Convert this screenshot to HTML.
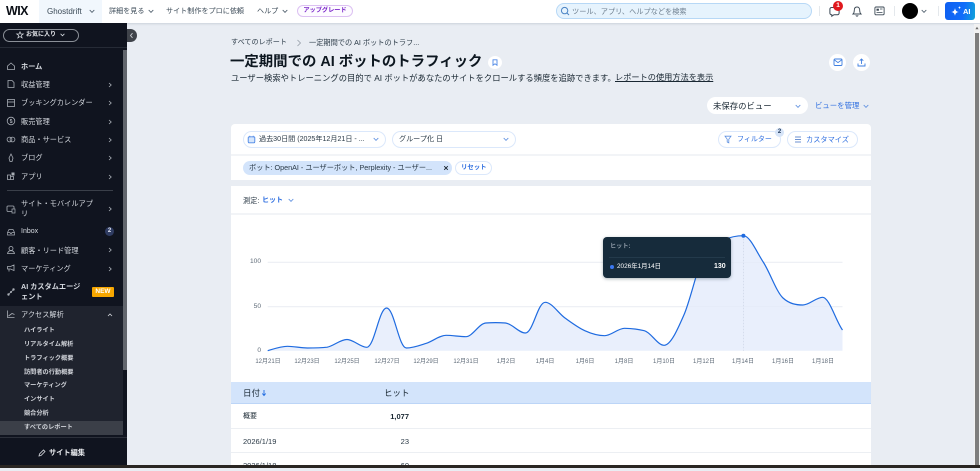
<!DOCTYPE html>
<html lang="ja">
<head>
<meta charset="utf-8">
<title>一定期間での AI ボットのトラフィック</title>
<style>
*{box-sizing:border-box;margin:0;padding:0}
html,body{width:980px;height:468px;overflow:hidden;background:#e9edf3;font-family:"Liberation Sans","Noto Sans CJK JP",sans-serif;color:#162d3d}
.a{position:absolute;white-space:nowrap}
svg{display:block;overflow:visible}
.top{position:absolute;left:0;top:0;width:980px;height:23px;background:#fff;box-shadow:0 1px 2px rgba(22,45,61,.14)}
.tn{font-size:7.1px;color:#3b4a57;top:6px;line-height:11px}
.side{position:absolute;left:0;top:23px;width:127px;height:442px;background:#10141f}
.m{position:absolute;left:21px;font-size:7.2px;line-height:11px;color:#d6dae0;white-space:nowrap}
.ch{position:absolute;left:107px;width:6px;height:6px}
.ic{position:absolute;left:6px;width:10px;height:10px}
.sub{position:absolute;left:24px;font-size:6.2px;line-height:10px;color:#d0d3d9;white-space:nowrap;font-weight:700}
.card{position:absolute;background:#fff}
.pill{position:absolute;background:#fff;border:1px solid #dbe8fb;border-radius:11px}
.blue{color:#2f6fe0}
.xl{position:absolute;top:357px;font-size:6px;line-height:10px;color:#5f6b78;transform:translateX(-50%);white-space:nowrap}
.yl{position:absolute;font-size:6.6px;line-height:10px;color:#5f6b78;text-align:right;width:14px;left:247px}
</style>
</head>
<body>

<!-- top bar -->
<div class="top">
  <div class="a" style="left:6px;top:3px;font-size:12.5px;line-height:16px;font-weight:700;color:#0b0f16;letter-spacing:-.6px">WIX</div>
  <div class="a" style="left:39px;top:0;width:63px;height:23px;background:#f1f7fd"></div>
  <div class="a tn" style="left:47px;font-size:8px">Ghostdrift</div>
  <svg class="a" style="left:89px;top:9px" width="6" height="5" viewBox="0 0 6 5"><path d="M.7 1 3 3.400 5.300 1" fill="none" stroke="#4a5a68" stroke-width=".9"/></svg>
  <div class="a tn" style="left:109px">詳細を見る</div>
  <svg class="a" style="left:148px;top:9px" width="6" height="5" viewBox="0 0 6 5"><path d="M.7 1 3 3.400 5.300 1" fill="none" stroke="#4a5a68" stroke-width=".9"/></svg>
  <div class="a tn" style="left:166px">サイト制作をプロに依頼</div>
  <div class="a tn" style="left:257px">ヘルプ</div>
  <svg class="a" style="left:282px;top:9px" width="6" height="5" viewBox="0 0 6 5"><path d="M.7 1 3 3.400 5.300 1" fill="none" stroke="#4a5a68" stroke-width=".9"/></svg>
  <div class="a" style="left:297px;top:5px;width:56px;height:12px;border:1px solid #dcc1f2;border-radius:7px;background:#fdfbff;color:#7a25c9;font-size:6.2px;line-height:10px;text-align:center;font-weight:700">アップグレード</div>

  <div class="a" style="left:556px;top:3px;width:256px;height:16px;border:1px solid #b7d8f6;border-radius:8px;background:#e6f3fd"></div>
  <svg class="a" style="left:560px;top:6px" width="10" height="10" viewBox="0 0 10 10"><circle cx="4.600" cy="4.600" r="3.200" fill="none" stroke="#4a83c4" stroke-width="1"/><path d="M7 7 9 9" stroke="#4a83c4" stroke-width="1"/></svg>
  <div class="a" style="left:572px;top:6px;font-size:7.200px;line-height:11px;color:#6d7e8e">ツール、アプリ、ヘルプなどを検索</div>

  <div class="a" style="left:819px;top:6px;width:1px;height:10px;background:#e4e8ec"></div>
  <svg class="a" style="left:829px;top:6px" width="11" height="11" viewBox="0 0 11 11"><path d="M2.500 1.500h6a1.600 1.600 0 0 1 1.600 1.600v4a1.600 1.600 0 0 1-1.600 1.600H5L2.800 10.200V8.700h-.3A1.600 1.600 0 0 1 .9 7.100v-4a1.600 1.600 0 0 1 1.600-1.600z" fill="none" stroke="#3a4753" stroke-width="1"/></svg>
  <div class="a" style="left:833px;top:1px;width:10px;height:10px;border-radius:50%;background:#e0181d;color:#fff;font-size:6.500px;line-height:10px;text-align:center;font-weight:700">1</div>
  <svg class="a" style="left:852px;top:6px" width="10" height="11" viewBox="0 0 10 11"><path d="M5 1C3 1 2.300 2.600 2.300 4.200c0 2-.5 3-1.300 3.800h8C8.200 7.200 7.700 6.200 7.700 4.200 7.700 2.600 7 1 5 1zM3.900 9.200c.2.700.6 1 1.100 1s.9-.3 1.100-1" fill="none" stroke="#3a4753" stroke-width=".9"/></svg>
  <svg class="a" style="left:874px;top:6px" width="11" height="10" viewBox="0 0 11 10"><rect x=".9" y="1" width="9.200" height="7.800" rx="1" fill="none" stroke="#3a4753" stroke-width=".9"/><rect x="2.500" y="2.700" width="2.400" height="2" fill="#3a4753"/><path d="M2.500 6.500h6M6 3h2.500" stroke="#3a4753" stroke-width=".8"/></svg>
  <div class="a" style="left:894px;top:6px;width:1px;height:10px;background:#e4e8ec"></div>
  <div class="a" style="left:902px;top:3px;width:16px;height:16px;border-radius:50%;background:#000"></div>
  <svg class="a" style="left:921px;top:9px" width="6" height="5" viewBox="0 0 6 5"><path d="M.7 1 3 3.400 5.300 1" fill="none" stroke="#4a5a68" stroke-width=".9"/></svg>
  <div class="a" style="left:938px;top:6px;width:1px;height:10px;background:#e4e8ec"></div>
  <div class="a" style="left:945px;top:2px;width:30px;height:18px;border-radius:3px;background:linear-gradient(100deg,#0f5ff0 0%,#116dfa 60%,#11a3d8 100%)"></div>
  <svg class="a" style="left:950px;top:5px" width="12" height="12" viewBox="0 0 12 12"><path d="M5 3C5.400 5.600 6.300 6.600 9 7 6.300 7.400 5.400 8.400 5 11 4.600 8.400 3.700 7.400 1 7 3.700 6.600 4.600 5.600 5 3z" fill="#fff"/><path d="M9.500 1c.2 1.100.5 1.400 1.500 1.600-1 .2-1.300.5-1.500 1.600-.2-1.100-.5-1.400-1.500-1.600 1-.2 1.300-.5 1.500-1.600z" fill="#fff"/></svg>
  <div class="a" style="left:963px;top:6px;font-size:7.500px;line-height:11px;color:#fff;font-weight:700">AI</div>
</div>

<!-- sidebar -->
<div class="side"></div>
<div class="a" style="left:0;top:23px;width:127px;height:25px;border-bottom:1px solid #262b36"></div>
<div class="a" style="left:3px;top:29px;width:76px;height:13px;border:1px solid #8b9098;border-radius:7px"></div>
<svg class="a" style="left:16px;top:31px" width="8" height="8" viewBox="0 0 8 8"><path d="M4 .8 4.900 3H7.300L5.400 4.400 6.100 6.900 4 5.500 1.900 6.900 2.600 4.400.7 3H3.100z" fill="none" stroke="#d6dae0" stroke-width=".7"/></svg>
<div class="a" style="left:26px;top:30px;font-size:6px;line-height:11px;color:#e6e8ec;font-weight:700">お気に入り</div>
<svg class="a" style="left:60px;top:33px" width="5" height="4" viewBox="0 0 5 4"><path d="M.6.800 2.500 2.800 4.400.800" fill="none" stroke="#d6dae0" stroke-width=".8"/></svg>
<div class="a" style="left:127px;top:29px;width:10px;height:13px;background:#3f434a;border-radius:0 7px 7px 0"></div>
<svg class="a" style="left:129px;top:32px" width="5" height="7" viewBox="0 0 5 7"><path d="M3.500 1.200 1.500 3.500 3.500 5.800" fill="none" stroke="#c9ccd1" stroke-width=".9"/></svg>

<!-- menu -->
<div class="m" style="top:61px;font-weight:700">ホーム</div>
<div class="m" style="top:79px">収益管理</div>
<div class="m" style="top:97px">ブッキングカレンダー</div>
<div class="m" style="top:116px">販売管理</div>
<div class="m" style="top:134px">商品・サービス</div>
<div class="m" style="top:152px">ブログ</div>
<div class="m" style="top:171px">アプリ</div>
<div class="a" style="left:7px;top:190px;width:106px;height:1px;background:#3a3f49"></div>
<div class="m" style="top:199px;line-height:10px">サイト・モバイルアプ<br>リ</div>
<div class="m" style="top:226px;font-size:7px">Inbox</div>
<div class="m" style="top:245px">顧客・リード管理</div>
<div class="m" style="top:263px">マーケティング</div>
<div class="m" style="top:282px;font-weight:700;line-height:10px">AI カスタムエージ<br>ェント</div>
<div class="a" style="left:92px;top:287px;width:22px;height:10px;background:#f7a700;border-radius:1px;color:#fff;font-size:6.500px;line-height:10px;text-align:center;font-weight:700">NEW</div>
<div class="a" style="left:105px;top:227px;width:9px;height:9px;border-radius:50%;background:#2f3c62;color:#e4e8f2;font-size:6px;line-height:9px;text-align:center;font-weight:700">2</div>

<svg class="ic" style="top:61px" viewBox="0 0 10 10"><path d="M1.500 5 5 2l3.500 3v3.500h-7z" fill="none" stroke="#a9aeb6" stroke-width=".8"/></svg>
<svg class="ic" style="top:79px" viewBox="0 0 10 10"><path d="M2 1.500h4l2 2v5H2z" fill="none" stroke="#a9aeb6" stroke-width=".8"/></svg>
<svg class="ic" style="top:98px" viewBox="0 0 10 10"><rect x="1.500" y="1.500" width="7" height="7" fill="none" stroke="#a9aeb6" stroke-width=".8"/><path d="M1.500 4h7" stroke="#a9aeb6" stroke-width=".8"/></svg>
<svg class="ic" style="top:116px" viewBox="0 0 10 10"><circle cx="5" cy="5" r="3.800" fill="none" stroke="#a9aeb6" stroke-width=".8"/><path d="M6 3.500H4.300v1.500H6v1.500H4" fill="none" stroke="#a9aeb6" stroke-width=".7"/></svg>
<svg class="ic" style="top:134px" viewBox="0 0 10 10"><circle cx="3.500" cy="5.500" r="2.400" fill="none" stroke="#a9aeb6" stroke-width=".8"/><circle cx="6.500" cy="5.500" r="2.400" fill="none" stroke="#a9aeb6" stroke-width=".8"/></svg>
<svg class="ic" style="top:153px" viewBox="0 0 10 10"><path d="M5 1 7 5 6 8.500H4L3 5z" fill="none" stroke="#a9aeb6" stroke-width=".8"/></svg>
<svg class="ic" style="top:171px" viewBox="0 0 10 10"><path d="M1.500 4h3v4.500h-3zM4.500 5.500h3v3h-3z" fill="none" stroke="#a9aeb6" stroke-width=".8"/><rect x="5.500" y="1.500" width="3" height="3" fill="#a9aeb6"/></svg>
<svg class="ic" style="top:204px" viewBox="0 0 10 10"><rect x="1" y="2" width="7" height="5.500" rx="1" fill="none" stroke="#a9aeb6" stroke-width=".8"/><rect x="6" y="5" width="3" height="4" fill="#10141f" stroke="#a9aeb6" stroke-width=".7"/></svg>
<svg class="ic" style="top:227px" viewBox="0 0 10 10"><path d="M1.500 5.500 3 2.500h4l1.500 3V8h-7zM1.500 5.500H4l.5 1h1l.5-1h2.500" fill="none" stroke="#a9aeb6" stroke-width=".7"/></svg>
<svg class="ic" style="top:245px" viewBox="0 0 10 10"><circle cx="5" cy="3.500" r="2" fill="none" stroke="#a9aeb6" stroke-width=".8"/><path d="M1.500 8.500c.5-2 2-2.800 3.500-2.800s3 .8 3.500 2.800z" fill="none" stroke="#a9aeb6" stroke-width=".8"/></svg>
<svg class="ic" style="top:263px" viewBox="0 0 10 10"><path d="M1.500 3.500h3L8 2v5.500L4.500 6h-3zM3 6v2.500" fill="none" stroke="#a9aeb6" stroke-width=".8"/></svg>
<svg class="ic" style="top:287px" viewBox="0 0 10 10"><path d="M2.500 7.500 7.500 2.500" stroke="#a9aeb6" stroke-width=".7"/><circle cx="2.500" cy="7.500" r="1.200" fill="#a9aeb6"/><circle cx="5" cy="5" r="1" fill="#a9aeb6"/><circle cx="7.500" cy="2.500" r="1.200" fill="#a9aeb6"/></svg>

<svg class="ch" style="top:82px" viewBox="0 0 6 6"><path d="M2 1 4.200 3 2 5" fill="none" stroke="#aeb3ba" stroke-width=".8"/></svg>
<svg class="ch" style="top:100px" viewBox="0 0 6 6"><path d="M2 1 4.200 3 2 5" fill="none" stroke="#aeb3ba" stroke-width=".8"/></svg>
<svg class="ch" style="top:119px" viewBox="0 0 6 6"><path d="M2 1 4.200 3 2 5" fill="none" stroke="#aeb3ba" stroke-width=".8"/></svg>
<svg class="ch" style="top:137px" viewBox="0 0 6 6"><path d="M2 1 4.200 3 2 5" fill="none" stroke="#aeb3ba" stroke-width=".8"/></svg>
<svg class="ch" style="top:155px" viewBox="0 0 6 6"><path d="M2 1 4.200 3 2 5" fill="none" stroke="#aeb3ba" stroke-width=".8"/></svg>
<svg class="ch" style="top:174px" viewBox="0 0 6 6"><path d="M2 1 4.200 3 2 5" fill="none" stroke="#aeb3ba" stroke-width=".8"/></svg>
<svg class="ch" style="top:206px" viewBox="0 0 6 6"><path d="M2 1 4.200 3 2 5" fill="none" stroke="#aeb3ba" stroke-width=".8"/></svg>
<svg class="ch" style="top:247px" viewBox="0 0 6 6"><path d="M2 1 4.200 3 2 5" fill="none" stroke="#aeb3ba" stroke-width=".8"/></svg>
<svg class="ch" style="top:266px" viewBox="0 0 6 6"><path d="M2 1 4.200 3 2 5" fill="none" stroke="#aeb3ba" stroke-width=".8"/></svg>

<!-- analytics -->
<div class="a" style="left:0;top:306px;width:123px;height:129px;background:#1f232e"></div>
<div class="m" style="top:309px">アクセス解析</div>
<svg class="ic" style="top:309px" viewBox="0 0 10 10"><path d="M1.500 1.500v7h7M2.500 7 6 4.500l2.500 1" fill="none" stroke="#a9aeb6" stroke-width=".8"/></svg>
<svg class="ch" style="top:312px" viewBox="0 0 6 6"><path d="M1 4 3 2 5 4" fill="none" stroke="#cfd3d8" stroke-width=".8"/></svg>
<div class="sub" style="top:326px">ハイライト</div>
<div class="sub" style="top:340px">リアルタイム解析</div>
<div class="sub" style="top:354px">トラフィック概要</div>
<div class="sub" style="top:368px">訪問者の行動概要</div>
<div class="sub" style="top:381px">マーケティング</div>
<div class="sub" style="top:395px">インサイト</div>
<div class="sub" style="top:409px">競合分析</div>
<div class="a" style="left:0;top:421px;width:123px;height:14px;background:#3b3f48"></div>
<div class="sub" style="top:423px">すべてのレポート</div>
<div class="a" style="left:123px;top:50px;width:4px;height:320px;background:#62666d"></div>
<div class="a" style="left:0;top:437px;width:127px;height:1px;background:#2c303a"></div>
<svg class="a" style="left:38px;top:449px" width="8" height="8" viewBox="0 0 8 8"><path d="M1 7 1.500 5 5.500 1 7 2.500 3 6.500z" fill="none" stroke="#d9dce1" stroke-width=".8"/></svg>
<div class="a" style="left:49px;top:447px;font-size:7.200px;line-height:11px;color:#eceef1;font-weight:700">サイト編集</div>

<!-- page header -->
<div class="a" style="left:231px;top:37px;font-size:7.100px;line-height:11px;color:#2c3b48">すべてのレポート</div>
<svg class="a" style="left:296px;top:39px" width="6" height="8" viewBox="0 0 6 8"><path d="M1.500 1 4.500 4 1.500 7" fill="none" stroke="#8a949e" stroke-width=".7"/></svg>
<div class="a" style="left:309px;top:37px;font-size:7.200px;line-height:11px;color:#2c3b48">一定期間での AI ボットのトラフ...</div>
<div class="a" style="left:230px;top:52px;font-size:14.400px;line-height:20px;font-weight:700;color:#0d1720">一定期間での AI ボットのトラフィック</div>
<div class="a" style="left:488px;top:56px;width:14px;height:13px;border-radius:50%;background:#fff"></div>
<svg class="a" style="left:492px;top:59px" width="6" height="7" viewBox="0 0 6 7"><path d="M1 .8h4v5.400L3 4.800 1 6.200z" fill="none" stroke="#4d88e6" stroke-width=".9"/></svg>
<div class="a" style="left:231px;top:72px;font-size:8.300px;line-height:12px;color:#1a2833">ユーザー検索やトレーニングの目的で AI ボットがあなたのサイトをクロールする頻度を追跡できます。</div>
<div class="a" style="left:615px;top:72px;font-size:8.200px;line-height:12px;color:#1a2833;text-decoration:underline">レポートの使用方法を表示</div>
<div class="a" style="left:829px;top:54px;width:17px;height:17px;border-radius:50%;background:#fff"></div>
<svg class="a" style="left:833px;top:58px" width="10" height="9" viewBox="0 0 10 9"><rect x="1" y="1" width="8" height="6.500" rx="1" fill="none" stroke="#3f7fe0" stroke-width=".9"/><path d="M1.200 1.800 5 4.600 8.800 1.800" fill="none" stroke="#3f7fe0" stroke-width=".9"/></svg>
<div class="a" style="left:853px;top:54px;width:17px;height:17px;border-radius:50%;background:#fff"></div>
<svg class="a" style="left:857px;top:58px" width="9" height="9" viewBox="0 0 9 9"><path d="M4.500 6V1M2.700 2.700 4.500 1l1.800 1.700M1 5.500V8h7V5.500" fill="none" stroke="#3f7fe0" stroke-width=".9"/></svg>

<div class="a" style="left:707px;top:97px;width:101px;height:17px;background:#fff;border-radius:9px"></div>
<div class="a" style="left:713px;top:100px;font-size:8.400px;line-height:12px;color:#1a2833">未保存のビュー</div>
<svg class="a" style="left:795px;top:104px" width="6" height="5" viewBox="0 0 6 5"><path d="M.7 1 3 3.400 5.300 1" fill="none" stroke="#5d8fe0" stroke-width=".9"/></svg>
<div class="a blue" style="left:815px;top:100px;font-size:7.400px;line-height:12px">ビューを管理</div>
<svg class="a" style="left:863px;top:104px" width="6" height="5" viewBox="0 0 6 5"><path d="M.7 1 3 3.400 5.300 1" fill="none" stroke="#5d8fe0" stroke-width=".9"/></svg>

<!-- filter card -->
<div class="card" style="left:231px;top:124px;width:640px;height:30px;border-radius:4px 4px 0 0"></div>
<div class="card" style="left:231px;top:156px;width:640px;height:24px"></div>
<div class="a" style="left:231px;top:154px;width:640px;height:2px;background:#f2f4f7"></div>
<div class="pill" style="left:243px;top:131px;width:143px;height:17px"></div>
<svg class="a" style="left:247px;top:135px" width="9" height="9" viewBox="0 0 9 9"><rect x="1.200" y="1.800" width="6.600" height="6" rx="1" fill="#d6e6fb" stroke="#4d88e6" stroke-width=".9"/><path d="M2.800.8v1.600M6.200.8v1.600" stroke="#4d88e6" stroke-width=".8"/></svg>
<div class="a" style="left:259px;top:134px;font-size:7.100px;line-height:11px;color:#2a3946">過去30日間 (2025年12月21日 - ...</div>
<svg class="a" style="left:373px;top:137px" width="6" height="5" viewBox="0 0 6 5"><path d="M.7 1 3 3.400 5.300 1" fill="none" stroke="#5d8fe0" stroke-width=".9"/></svg>
<div class="pill" style="left:392px;top:131px;width:124px;height:17px"></div>
<div class="a" style="left:399px;top:134px;font-size:7.100px;line-height:11px;color:#2a3946">グループ化 日</div>
<svg class="a" style="left:503px;top:137px" width="6" height="5" viewBox="0 0 6 5"><path d="M.7 1 3 3.400 5.300 1" fill="none" stroke="#5d8fe0" stroke-width=".9"/></svg>
<div class="pill" style="left:718px;top:131px;width:63px;height:17px"></div>
<svg class="a" style="left:724px;top:135px" width="8" height="9" viewBox="0 0 8 9"><path d="M1 1.200h6L4.800 4.200V7.800L3.200 7V4.200z" fill="none" stroke="#5d8fe0" stroke-width=".8"/></svg>
<div class="a blue" style="left:737px;top:134px;font-size:7px;line-height:11px">フィルター</div>
<div class="a" style="left:775px;top:128px;width:9px;height:9px;border-radius:50%;background:#d6e4f8;color:#1d3557;font-size:6px;line-height:9px;text-align:center;font-weight:700">2</div>
<div class="pill" style="left:787px;top:131px;width:71px;height:17px"></div>
<svg class="a" style="left:794px;top:135px" width="8" height="9" viewBox="0 0 8 9"><path d="M1 2h6M1 4.500h6M1 7h6" stroke="#3d6fc4" stroke-width=".8"/></svg>
<div class="a blue" style="left:806px;top:134px;font-size:7.200px;line-height:11px">カスタマイズ</div>

<div class="a" style="left:243px;top:161px;width:209px;height:14px;background:#d3e4fb;border-radius:7px"></div>
<div class="a" style="left:249px;top:162px;font-size:7.200px;line-height:12px;color:#2a3946">ボット: OpenAI - ユーザーボット, Perplexity - ユーザー...</div>
<svg class="a" style="left:443px;top:165px" width="6" height="6" viewBox="0 0 6 6"><path d="M1.200 1.200 4.800 4.800M4.800 1.200 1.200 4.800" stroke="#16222c" stroke-width=".9"/></svg>
<div class="pill" style="left:455px;top:161px;width:37px;height:14px"></div>
<div class="a blue" style="left:461px;top:163px;font-size:6.400px;line-height:10px;font-weight:700">リセット</div>

<!-- chart card -->
<div class="card" style="left:231px;top:186px;width:640px;height:279px"></div>
<div class="a" style="left:231px;top:213px;width:640px;height:2px;background:#f2f4f7"></div>
<div class="a" style="left:243px;top:195px;font-size:7.200px;line-height:11px;color:#2a3946">測定:</div>
<div class="a blue" style="left:262px;top:195px;font-size:7px;line-height:11px;font-weight:700">ヒット</div>
<svg class="a" style="left:288px;top:198px" width="6" height="5" viewBox="0 0 6 5"><path d="M.7 1 3 3.400 5.300 1" fill="none" stroke="#5d8fe0" stroke-width=".9"/></svg>

<div class="yl" style="top:257px">100</div>
<div class="yl" style="top:302px">50</div>
<div class="yl" style="top:346px">0</div>
<svg class="a" style="left:0;top:0" width="980" height="468" viewBox="0 0 980 468">
  <path d="M267.700 262.300H842.500M267.700 306.700H842.500" stroke="#eef0f3" stroke-width="1"/>
  <path d="M267.700 350.700C274.300 348.700 280.900 346.300 287.500 346.300C294.100 346.300 300.700 348 307.300 348C313.900 348 320.600 347.900 327.200 347.200C333.800 345.800 340.400 339.500 347 339.500C353.600 339.500 360.200 347.300 366.800 347.300C374.400 347.300 379 308 386.600 308C394.200 308 398.800 348 406.400 348C413 348 419.700 345.400 426.300 343.300C432.900 341.200 439.500 335.300 446.100 335.300C452.700 335.300 459.300 336.700 465.900 336.700C472.500 336.700 479.100 323.500 485.700 323C492.300 322.500 498.900 322.500 505.500 323C512.100 323.500 518.800 333 525.400 333C533 333 537.600 302.300 545.200 302.300C551.800 302.300 558.400 313.300 565 318C571.600 322.700 578.200 327.700 584.800 330.700C591.400 333.700 598 335.700 604.600 335.700C611.200 335.700 617.900 328.300 624.500 328.300C631.100 328.300 637.700 329.200 644.300 330.700C650.900 332.200 657.500 345.300 664.100 345.300C670.700 345.300 677.300 330 683.900 315C690.500 300 697.100 268 703.700 255C710.300 242 717 243 723.600 240C730.200 237 736.800 235.700 743.400 235.700C750 235.700 756.600 252 763.200 262C769.800 272 776.400 292 783 298C789.600 304 796.300 305 802.900 305C809.500 305 816.100 297.300 822.700 297.300C829.300 297.300 835.900 321 842.500 330L842.500 350.700L267.700 350.700Z" fill="#e9effc" stroke="none"/>
  <path d="M743.400 235.700V350.700" stroke="#cfd8e8" stroke-width=".8" stroke-dasharray="1.500 1.500"/>
  <path d="M267.700 262.300H842.500M267.700 306.700H842.500" stroke="#dfe5f0" stroke-width=".5" opacity=".5"/>
  <path d="M267.700 350.700C274.300 348.700 280.900 346.300 287.500 346.300C294.100 346.300 300.700 348 307.300 348C313.900 348 320.600 347.900 327.200 347.200C333.800 345.800 340.400 339.500 347 339.500C353.600 339.500 360.200 347.300 366.800 347.300C374.400 347.300 379 308 386.600 308C394.200 308 398.800 348 406.400 348C413 348 419.700 345.400 426.300 343.300C432.900 341.200 439.500 335.300 446.100 335.300C452.700 335.300 459.300 336.700 465.900 336.700C472.500 336.700 479.100 323.500 485.700 323C492.300 322.500 498.900 322.500 505.500 323C512.100 323.500 518.800 333 525.400 333C533 333 537.600 302.300 545.200 302.300C551.800 302.300 558.400 313.300 565 318C571.600 322.700 578.200 327.700 584.800 330.700C591.400 333.700 598 335.700 604.600 335.700C611.200 335.700 617.900 328.300 624.500 328.300C631.100 328.300 637.700 329.200 644.300 330.700C650.900 332.200 657.500 345.300 664.100 345.300C670.700 345.300 677.300 330 683.900 315C690.500 300 697.100 268 703.700 255C710.300 242 717 243 723.600 240C730.200 237 736.800 235.700 743.400 235.700C750 235.700 756.600 252 763.200 262C769.800 272 776.400 292 783 298C789.600 304 796.300 305 802.900 305C809.500 305 816.100 297.300 822.700 297.300C829.300 297.300 835.900 321 842.500 330" fill="none" stroke="#1f6be0" stroke-width="1.200"/>
  <circle cx="743.400" cy="235.700" r="2" fill="#1f6be0"/>
</svg>
<div class="xl" style="left:268px">12月21日</div>
<div class="xl" style="left:307px">12月23日</div>
<div class="xl" style="left:347px">12月25日</div>
<div class="xl" style="left:387px">12月27日</div>
<div class="xl" style="left:426px">12月29日</div>
<div class="xl" style="left:466px">12月31日</div>
<div class="xl" style="left:506px">1月2日</div>
<div class="xl" style="left:545px">1月4日</div>
<div class="xl" style="left:585px">1月6日</div>
<div class="xl" style="left:624px">1月8日</div>
<div class="xl" style="left:664px">1月10日</div>
<div class="xl" style="left:704px">1月12日</div>
<div class="xl" style="left:743px">1月14日</div>
<div class="xl" style="left:783px">1月16日</div>
<div class="xl" style="left:823px">1月18日</div>

<!-- tooltip -->
<div class="a" style="left:603px;top:237px;width:128px;height:41px;background:#162b3b;border-radius:4px;box-shadow:0 1px 3px rgba(22,45,61,.35)"></div>
<div class="a" style="left:610px;top:242px;font-size:6.200px;line-height:10px;color:#8a97a3;font-weight:700">ヒット:</div>
<div class="a" style="left:609px;top:257px;width:116px;height:1px;background:#233a4b"></div>
<div class="a" style="left:610px;top:265px;width:4px;height:4px;border-radius:50%;background:#3b78f0"></div>
<div class="a" style="left:617px;top:262px;font-size:6.400px;line-height:10px;color:#fff">2026年1月14日</div>
<div class="a" style="left:714px;top:262px;font-size:7px;line-height:10px;color:#fff;font-weight:700">130</div>

<!-- table -->
<div class="a" style="left:231px;top:382px;width:640px;height:22px;background:#d3e4fb;border-bottom:1px solid #bcd5f7"></div>
<div class="a" style="left:243px;top:387px;font-size:8.500px;line-height:12px;color:#1a2833">日付</div>
<svg class="a" style="left:261px;top:389px" width="6" height="8" viewBox="0 0 6 8"><path d="M3 1v5M1.300 4.500 3 6.500 4.700 4.500" fill="none" stroke="#1f6be0" stroke-width=".9"/></svg>
<div class="a" style="left:384px;top:387px;font-size:8.500px;line-height:12px;color:#1a2833">ヒット</div>
<div class="a" style="left:243px;top:411px;font-size:7px;line-height:11px;color:#1a2833">概要</div>
<div class="a" style="left:380px;width:29px;top:411px;font-size:7.500px;line-height:11px;color:#1a2833;font-weight:700;text-align:right">1,077</div>
<div class="a" style="left:231px;top:428px;width:640px;height:1px;background:#eceff3"></div>
<div class="a" style="left:243px;top:436px;font-size:7.500px;line-height:11px;color:#2a3946">2026/1/19</div>
<div class="a" style="left:380px;width:29px;top:436px;font-size:7.500px;line-height:11px;color:#2a3946;text-align:right">23</div>
<div class="a" style="left:231px;top:452px;width:640px;height:1px;background:#eceff3"></div>
<div class="a" style="left:243px;top:460px;font-size:7.500px;line-height:11px;color:#2a3946">2026/1/18</div>
<div class="a" style="left:380px;width:29px;top:460px;font-size:7.500px;line-height:11px;color:#2a3946;text-align:right">60</div>

<!-- page scrollbar -->
<div class="a" style="left:974px;top:24px;width:6px;height:444px;background:#f1f1f1"></div>
<svg class="a" style="left:975px;top:26px" width="4" height="4" viewBox="0 0 4 4"><path d="M2 .8 3.600 3.200H.4z" fill="#6a6a6a"/></svg>
<div class="a" style="left:975px;top:33px;width:4px;height:435px;background:#7d7d7d"></div>

<!-- bottom strip -->
<div class="a" style="left:0;top:465px;width:980px;height:3px;background:#2a2622"></div>
</body>
</html>
